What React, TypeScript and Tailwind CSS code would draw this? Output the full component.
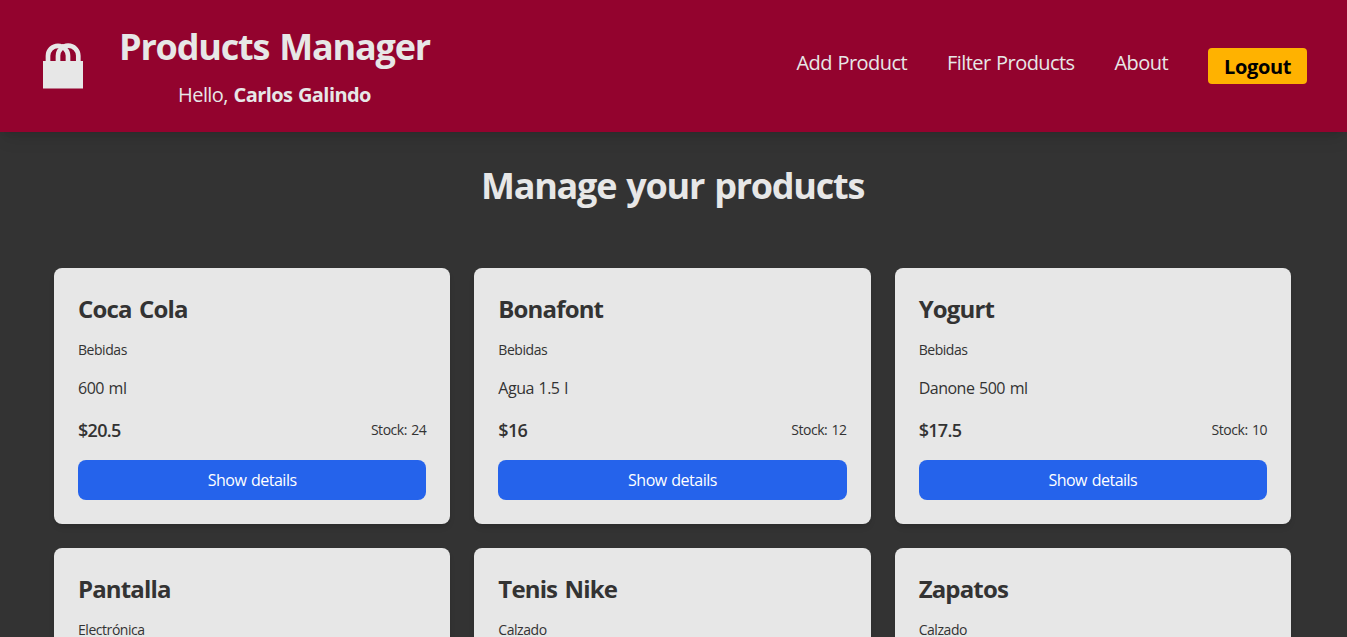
const products = [
  { name: "Coca Cola", category: "Bebidas", description: "600 ml", price: "$20.5", stock: 24 },
  { name: "Bonafont", category: "Bebidas", description: "Agua 1.5 l", price: "$16", stock: 12 },
  { name: "Yogurt", category: "Bebidas", description: "Danone 500 ml", price: "$17.5", stock: 10 },
  { name: "Pantalla", category: "Electrónica" },
  { name: "Tenis Nike", category: "Calzado" },
  { name: "Zapatos", category: "Calzado" },
];

type Product = { name: string; category: string; description?: string; price?: string; stock?: number };

function BagIcon() {
  return (
    <svg className="h-[46px] w-10 shrink-0" viewBox="0 0 40 46" fill="none">
      <path d="M0 18H40V45.5H0Z" fill="#e7e7e7" />
      <path d="M5 19V12.8A10 10 0 0 1 25 12.8V19M15 19V12.8A10 10 0 0 1 35.3 12.8V19" stroke="#e7e7e7" strokeWidth="4.7" />
    </svg>
  );
}

function Card({ product }: { product: Product }) {
  return (
    <article className="h-64 rounded-lg bg-[#e7e7e7] p-6 text-[#333] shadow-md">
      <h2 className="-mt-px text-2xl leading-9 font-bold tracking-[-0.85px] [word-spacing:2px]">{product.name}</h2>
      <p className="mt-[13px] text-sm tracking-[-0.45px]">{product.category}</p>
      <p className="mt-4 text-base tracking-[-0.5px] [word-spacing:1px]">{product.description}</p>
      {product.price && (
        <>
          <div className="mt-4 flex items-center justify-between">
            <span className="text-lg font-semibold tracking-[-0.7px]">{product.price}</span>
            <span className="text-sm tracking-[-0.45px] [word-spacing:1px]">Stock: {product.stock}</span>
          </div>
          <button className="mt-4 h-10 w-full rounded-lg bg-[#2563eb] text-base tracking-[-0.5px] text-white [word-spacing:1px]">Show details</button>
        </>
      )}
    </article>
  );
}

export default function App() {
  return (
    <div className="h-screen overflow-hidden bg-[#333] font-['Segoe_UI','Open_Sans','Noto_Sans',sans-serif]">
      <header className="flex h-[132px] items-center justify-between bg-[#93032e] pr-10 pl-[43px] text-[#e7e7e7] shadow-lg">
        <div className="flex items-center gap-9">
          <BagIcon />
          <div className="pt-[3px] text-center">
            <h1 className="text-4xl font-bold tracking-[-1.2px] [word-spacing:2px]">Products Manager</h1>
            <p className="mt-[14px] text-xl tracking-[-0.58px] [word-spacing:1px]">Hello, <strong>Carlos Galindo</strong></p>
          </div>
        </div>
        <nav className="flex items-center gap-10 text-xl tracking-[-0.57px] [word-spacing:1px]">
          <a className="pb-1.5">Add Product</a>
          <a className="pb-1.5">Filter Products</a>
          <a className="pb-1.5">About</a>
          <button className="h-9 w-[99px] rounded bg-[#ffb200] pt-0.5 font-bold tracking-[-0.35px] text-black">Logout</button>
        </nav>
      </header>
      <main>
        <h1 className="pt-[34px] pr-0.5 text-center text-4xl font-bold tracking-[-1.25px] text-[#e7e7e7] [word-spacing:2px]">Manage your products</h1>
        <div className="mt-[62px] grid grid-cols-3 gap-6 pr-14 pl-[54px]">
          {products.map((p) => <Card key={p.name} product={p} />)}
        </div>
      </main>
    </div>
  );
}
